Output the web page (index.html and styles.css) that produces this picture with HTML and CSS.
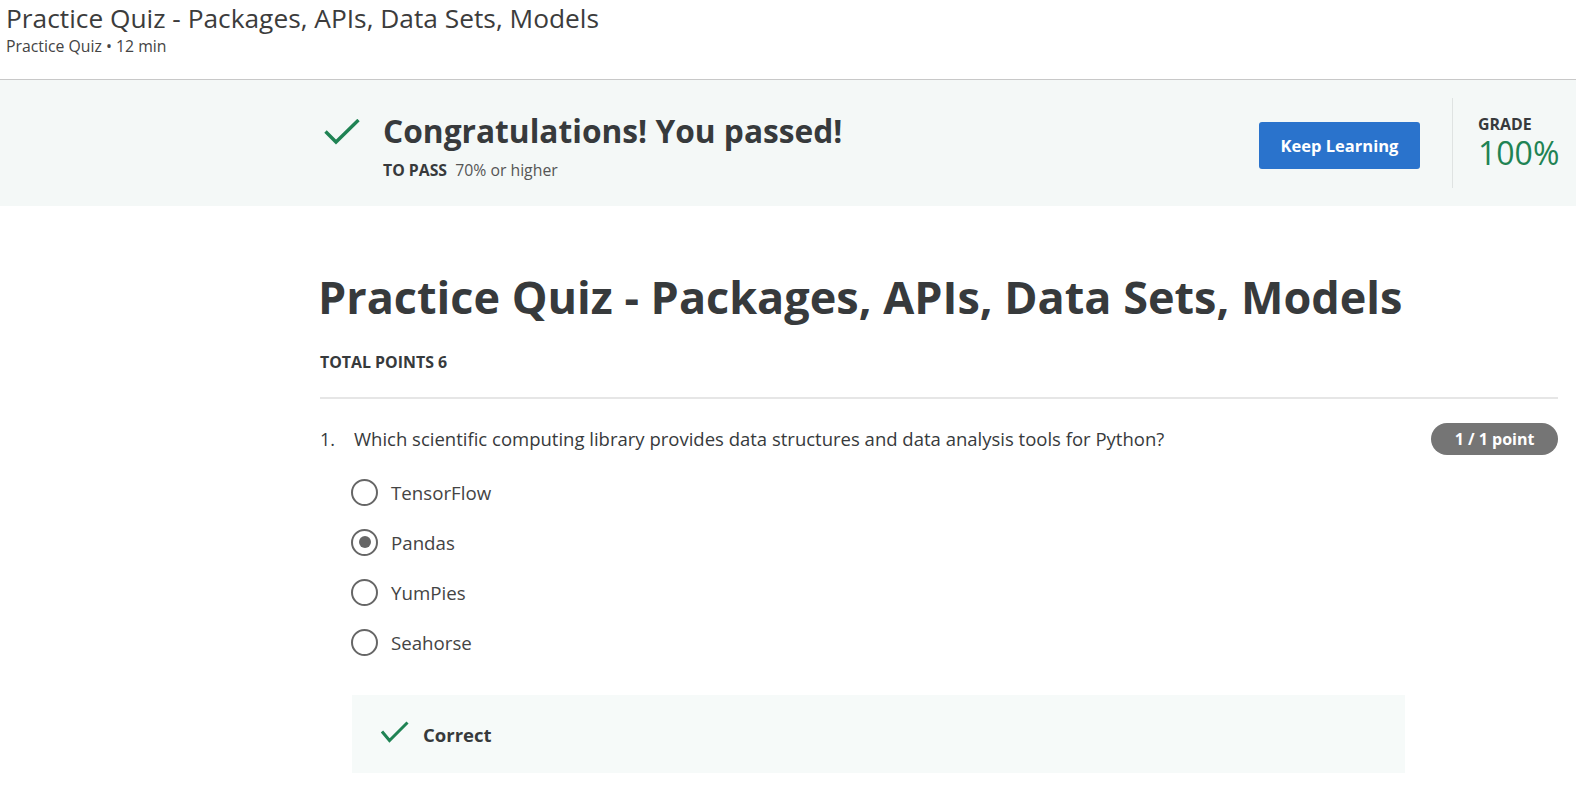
FILE: index.html
```html
<!DOCTYPE html>
<html lang="en">
<head>
<meta charset="utf-8">
<title>Practice Quiz - Packages, APIs, Data Sets, Models</title>
<link rel="stylesheet" href="styles.css">
</head>
<body>
<header class="topbar">
  <div class="topbar-title">Practice Quiz - Packages, APIs, Data Sets, Models</div>
  <div class="topbar-sub">Practice Quiz • 12 min</div>
</header>

<section class="banner">
  <svg class="banner-check" width="36" height="26" viewBox="0 0 36 26" aria-hidden="true">
    <polyline points="1.5,12.5 12,23 34.5,1" fill="none" stroke="#1f8354" stroke-width="3.4"/>
  </svg>
  <div class="banner-text">
    <div class="banner-title">Congratulations! You passed!</div>
    <div class="banner-pass"><span class="pass-label">TO PASS</span> 70% or higher</div>
  </div>
  <div class="banner-spacer"></div>
  <button class="keep-btn">Keep Learning</button>
  <div class="banner-divider"></div>
  <div class="grade">
    <div class="grade-label">GRADE</div>
    <div class="grade-value">100%</div>
  </div>
</section>

<main class="content">
  <h1 class="quiz-title">Practice Quiz - Packages, APIs, Data Sets, Models</h1>
  <div class="total-points">TOTAL POINTS 6</div>
  <div class="separator"></div>

  <div class="question">
    <div class="question-row">
      <span class="q-num">1.</span>
      <span class="q-text">Which scientific computing library provides data structures and data analysis tools for Python?</span>
      <span class="q-badge">1 / 1 point</span>
    </div>
    <div class="options">
      <div class="option"><span class="radio"></span><span class="opt-label">TensorFlow</span></div>
      <div class="option"><span class="radio checked"></span><span class="opt-label">Pandas</span></div>
      <div class="option"><span class="radio"></span><span class="opt-label">YumPies</span></div>
      <div class="option"><span class="radio"></span><span class="opt-label">Seahorse</span></div>
    </div>
    <div class="feedback">
      <svg class="fb-check" width="28" height="22" viewBox="0 0 28 22" aria-hidden="true">
        <polyline points="1,10.5 8.5,19.5 26.5,1.5" fill="none" stroke="#1f8354" stroke-width="3"/>
      </svg>
      <span class="fb-text">Correct</span>
    </div>
  </div>
</main>
</body>
</html>
```

FILE: styles.css
```css
* { box-sizing: border-box; }

body {
  margin: 0;
  font-family: "Open Sans", "Liberation Sans", sans-serif;
  color: #373a3c;
  background: #fff;
}

.topbar {
  height: 80px;
  padding: 2px 0 0 6px;
  border-bottom: 1px solid #c8c8c8;
}

.topbar-title {
  font-size: 26.3px;
  line-height: 32px;
  color: #3c3c3c;
}

.topbar-sub {
  font-size: 15.8px;
  line-height: 22px;
  color: #444;
  margin-top: 1px;
}

.banner {
  height: 126px;
  background: #f4f8f7;
  display: flex;
  align-items: center;
  padding: 0 18px 0 324px;
}

.banner-check {
  flex: none;
  margin-top: -22px;
}

.banner-text {
  margin-left: 23px;
  margin-top: 5px;
}

.banner-title {
  font-size: 31.7px;
  font-weight: 700;
  line-height: 40px;
}

.banner-pass {
  font-size: 15.8px;
  line-height: 22px;
  color: #555;
  margin-top: 8px;
}

.pass-label {
  font-weight: 700;
  color: #373a3c;
  margin-right: 4px;
}

.banner-spacer { flex: 1; }

.keep-btn {
  width: 161px;
  height: 47px;
  border: none;
  border-radius: 3px;
  background: #2a73cc;
  color: #fff;
  font-family: inherit;
  font-size: 16.5px;
  font-weight: 700;
  margin-top: 4px;
}

.banner-divider {
  width: 1px;
  height: 90px;
  background: #dfe3e2;
  margin: 0 25px 0 32px;
}

.grade { width: 80px; margin-top: -4px; }

.grade-label {
  font-size: 15.9px;
  font-weight: 700;
  line-height: 20px;
}

.grade-value {
  margin-top: 3px;
  font-size: 32px;
  line-height: 32px;
  color: #1f8354;
}

.content {
  padding: 0 18px 0 320px;
}

.quiz-title {
  margin: 63px 0 0 -2px;
  font-size: 45px;
  font-weight: 700;
  line-height: 56px;
}

.total-points {
  margin-top: 26px;
  font-size: 15.9px;
  font-weight: 700;
  line-height: 22px;
}

.separator {
  margin-top: 24px;
  height: 2px;
  background: #e6e6e6;
}

.question-row {
  display: flex;
  align-items: center;
  margin-top: 24px;
  height: 32px;
}

.q-num {
  width: 34px;
  font-size: 18px;
  line-height: 24px;
}

.q-text {
  flex: 1;
  font-size: 18.5px;
  line-height: 24px;
  white-space: nowrap;
}

.q-badge {
  width: 127px;
  height: 32px;
  border-radius: 16px;
  background: #757575;
  color: #fff;
  font-size: 16px;
  font-weight: 700;
  display: flex;
  align-items: center;
  justify-content: center;
}

.options {
  margin-top: 12px;
  padding-left: 31px;
}

.option {
  height: 50px;
  display: flex;
  align-items: center;
}

.radio {
  width: 27px;
  height: 27px;
  border: 2.5px solid #666;
  border-radius: 50%;
  display: flex;
  align-items: center;
  justify-content: center;
  flex: none;
}

.radio.checked::after {
  content: "";
  width: 12px;
  height: 12px;
  border-radius: 50%;
  background: #666;
}

.opt-label {
  margin-left: 13px;
  font-size: 18.7px;
  color: #444;
}

.feedback {
  margin: 28px 0 0 32px;
  width: 1053px;
  height: 78px;
  background: #f6faf9;
  display: flex;
  align-items: center;
  padding-left: 29px;
}

.fb-check { flex: none; margin-top: -4px; }

.fb-text {
  margin-left: 14px;
  font-size: 18.5px;
  font-weight: 700;
}
```
